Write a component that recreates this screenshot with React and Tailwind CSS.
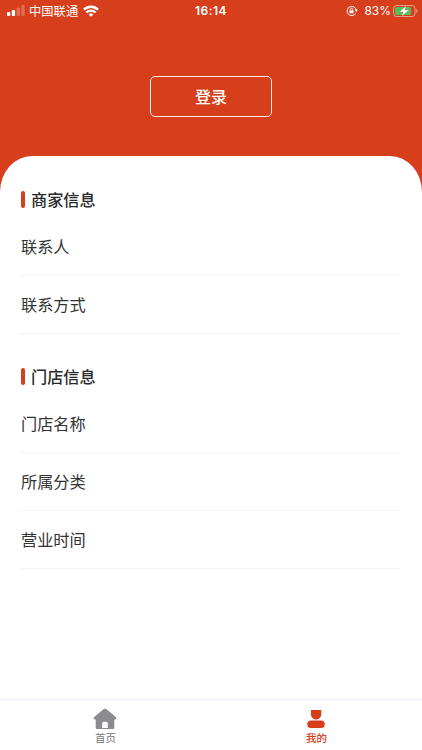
const groups = [
  { title: '商家信息', rows: ['联系人', '联系方式'] },
  { title: '门店信息', rows: ['门店名称', '所属分类', '营业时间'] },
];

function StatusBar() {
  return (
    <div className="grid h-[22px] grid-cols-3 items-center text-[12px] leading-[22px]">
      <div className="flex items-center pl-[7px]">
        <svg width="18" height="12" viewBox="0 0 18 12" fill="#fff">
          <rect x="0" y="7" width="3.3" height="4" rx="1" />
          <rect x="4.8" y="5" width="3.3" height="6" rx="1" />
          <rect x="9.6" y="2.5" width="3.3" height="8.5" rx="1" opacity=".25" />
          <rect x="14.3" y="0" width="3.3" height="11" rx="1" opacity=".25" />
        </svg>
        <span className="ml-[4px] whitespace-nowrap text-[12.3px]">中国联通</span>
        <svg className="ml-[5px] shrink-0" width="16" height="12" viewBox="0 0 16 12" fill="none" stroke="#fff" strokeWidth="2.4">
          <path d="M1 4.6a10 10 0 0 1 14 0" />
          <path d="M3.4 7.5a6.5 6.5 0 0 1 9.2 0" />
          <path d="M5.6 9.4a3.4 3.4 0 0 1 4.8 0L8 11.8z" fill="#fff" stroke="none" />
        </svg>
      </div>
      <span className="text-center font-['Inter',sans-serif] text-[12px] font-semibold tracking-[0.5px]">16:14</span>
      <div className="flex items-center justify-end pr-[4px]">
        <svg width="12" height="12" viewBox="0 0 12 12" fill="none" stroke="#fff">
          <path d="M9.7 8.3A4.6 4.6 0 1 1 10.2 5" strokeWidth="1" />
          <path d="M8.5 4.7h3.3L10.2 7z" fill="#fff" stroke="none" />
          <rect x="3.5" y="5.3" width="4" height="3" rx=".5" fill="#fff" stroke="none" />
          <path d="M4.3 5.5V4.4a1.2 1.2 0 0 1 2.4 0v1.1" strokeWidth=".8" />
        </svg>
        <span className="ml-[6px] font-['Inter',sans-serif] text-[12px]">83%</span>
        <svg className="ml-[2px]" width="25" height="12" viewBox="0 0 25 12">
          <rect x=".5" y=".5" width="21.5" height="11" rx="3" fill="none" stroke="#fff" strokeOpacity=".5" />
          <rect x="2" y="2" width="16" height="8" rx="1.6" fill="#4cc45c" />
          <path d="M23.2 4v4c1.7-.6 1.7-3.4 0-4z" fill="#fff" opacity=".55" />
          <path d="M13.4.6 6.2 6.9h4L8.6 11.6l7.6-6.5H12z" fill="#fff" stroke="#d63e1c" strokeWidth=".3" />
        </svg>
      </div>
    </div>
  );
}

function InfoGroup({ title, rows }) {
  return (
    <section className="px-[21px]">
      <h2 className="flex h-[26px] items-center text-[16.2px] font-medium text-[#2a2a2a]">
        <span className="mr-[6px] h-[17px] w-[4px] rounded-[2px] bg-[#d63e1c]" />
        {title}
      </h2>
      <div className="pt-[6px]">
        {rows.map((row) => (
          <div key={row} className="flex h-[58px] items-center border-b border-[#f3f3f3] text-[16.2px] text-[#333]">
            {row}
          </div>
        ))}
      </div>
    </section>
  );
}

export default function App() {
  return (
    <div className="flex h-[750px] w-[422px] flex-col overflow-hidden bg-[#d63e1c] font-['Noto_Sans_CJK_SC',sans-serif]">
      <header className="flex h-[156px] shrink-0 flex-col text-white">
        <StatusBar />
        <button className="mx-auto mt-[54px] h-[41px] w-[122px] rounded-[5px] border border-white/90 pb-[2px] text-[16px] font-medium">
          登录
        </button>
      </header>
      <main className="flex flex-1 flex-col gap-[29px] bg-white pt-[30px] [border-top-left-radius:32px_36px] [border-top-right-radius:32px_36px]">
        {groups.map((group) => (
          <InfoGroup key={group.title} {...group} />
        ))}
      </main>
      <nav className="grid h-[52px] shrink-0 grid-cols-2 border-t-[3px] border-[#f6f7fd] bg-white text-[10.5px] leading-[14px]">
        <div className="flex flex-col items-center pt-[7px] text-[#77777b]">
          <svg className="-ml-[1px]" width="24" height="22" viewBox="0 0 24 22">
            <path d="M10.8 1.1q1.2-.9 2.4 0l9.6 7.8q1.6 2-.5 2.5H21.300v8q0 1.600-1.600 1.600h-15.400Q2.700 21 2.700 19.400v-8H1.700Q-.4 10.900 1.200 8.900zM9.200 20h5.600v-4.700q0-1.500-1.500-1.500h-2.600q-1.500 0-1.500 1.500z" fill="#8b8b90" fillRule="evenodd" />
          </svg>
          <span className="mt-[1px]">首页</span>
        </div>
        <div className="flex flex-col items-center pt-[7px] text-[#d63e1c]">
          <svg className="-ml-[1px]" width="18" height="22" viewBox="0 0 18 22" fill="#d63e1c">
            <path d="M3.9 2h10.400v4.300a5.200 5.200 0 0 1-10.400 0z" />
            <rect x=".3" y="12.500" width="17.400" height="7.500" rx="3.500" />
          </svg>
          <span className="mt-[1px] font-medium">我的</span>
        </div>
      </nav>
    </div>
  );
}
